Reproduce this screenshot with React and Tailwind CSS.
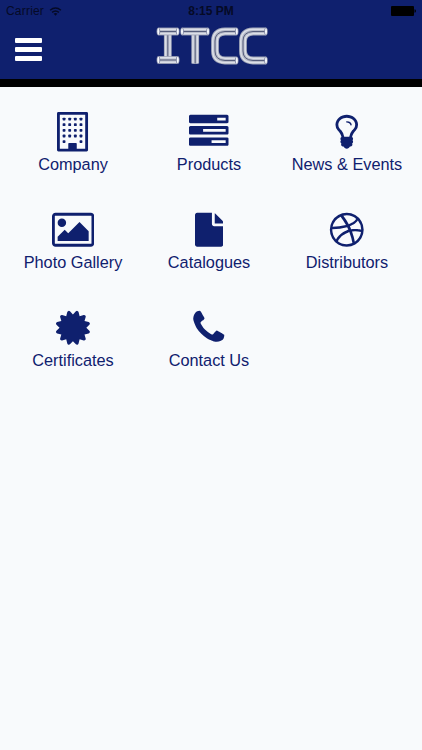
import React from "react";

const paths = {
  tasks:
    "M1024 1408h640v-128h-640v128zm-384-512h1024v-128h-1024v128zm640-512h384v-128h-384v128zm512 832v256q0 26-19 45t-45 19h-1664q-26 0-45-19t-19-45v-256q0-26 19-45t45-19h1664q26 0 45 19t19 45zm0-512v256q0 26-19 45t-45 19h-1664q-26 0-45-19t-19-45v-256q0-26 19-45t45-19h1664q26 0 45 19t19 45zm0-512v256q0 26-19 45t-45 19h-1664q-26 0-45-19t-19-45v-256q0-26 19-45t45-19h1664q26 0 45 19t19 45z",
  bulb:
    "M1120 576q0 13-9.5 22.5t-22.5 9.5-22.5-9.5-9.5-22.5q0-46-54-71t-106-25q-13 0-22.5-9.5t-9.5-22.5 9.5-22.5 22.5-9.5q50 0 99.5 16t87 54 37.5 90zm160 0q0-72-34.5-134t-90-101.5-123-62-136.5-22.5-136.5 22.5-123 62-90 101.5-34.5 134q0 101 68 180 10 11 30.5 33t30.5 33q128 153 141 298h228q13-145 141-298 10-11 30.5-33t30.5-33q68-79 68-180zm128 0q0 155-103 268-45 49-74.5 87t-59.5 95.5-34 107.5q47 28 47 82 0 37-25 64 25 27 25 64 0 52-45 81 13 23 13 47 0 46-31.5 71t-77.5 25q-20 44-60 70t-87 26-87-26-60-70q-46 0-77.5-25t-31.5-71q0-24 13-47-45-29-45-81 0-37 25-64-25-27-25-64 0-54 47-82-4-50-34-107.5t-59.5-95.5-74.5-87q-103-113-103-268 0-99 44.5-184.5t117-142 164-89 186.5-32.5 186.5 32.5 164 89 117 142 44.5 184.5z",
  picture:
    "M640 576q0 80-56 136t-136 56-136-56-56-136 56-136 136-56 136 56 56 136zm1024 384v448h-1408v-192l320-320 160 160 512-512zm96-704h-1600q-13 0-22.5 9.5t-9.5 22.5v1216q0 13 9.5 22.5t22.5 9.5h1600q13 0 22.5-9.5t9.5-22.5v-1216q0-13-9.5-22.5t-22.5-9.5zm160 32v1216q0 66-47 113t-113 47h-1600q-66 0-113-47t-47-113v-1216q0-66 47-113t113-47h1600q66 0 113 47t47 113z",
  file:
    "M768 128v512q0 40 28 68t68 28h416v832q0 40-28 68t-68 28h-1088q-40 0-68-28t-28-68v-1344q0-40 28-68t68-28zM896 608v-464q20 8 34 22l308 308q30 32 42 70v64z",
  dribbble:
    "M1152 1500q-42-241-140-498h-2l-2 1q-16 6-43 16.5t-101 49-137 82-131 114.5-103 148l-15-11q184 150 418 150 132 0 256-52zm-185-607q-21-49-53-111-311 93-673 93-1 7-1 21 0 124 44 236.5t124 201.5q50-89 123.5-166.5t142.5-124.5 130.5-81 99.5-48l37-13q4-1 13-3.5t13-4.5zm-107-212q-120-213-244-378-138 65-234 186t-128 272q302 0 606-80zm684 319q-210-60-409-29 87 239 128 469 111-75 185-189.5t96-250.5zm-805-741q-1 0-2 1 1-1 2-1zm590 145q-185-164-433-164-76 0-155 19 131 170 246 382 69-26 130-60.5t96.5-61.5 65.5-57 37.5-40.5zm223 485q-3-232-149-410l-1 1q-9 12-19 24.5t-43.5 44.5-71 60.5-100 65-131.5 64.5q25 53 44 95 2 5 6.5 17t7.5 17q36-5 74.5-7t73.5-2 69 1.5 64 4 56.5 5.5 48 6.5 36.5 6 25 4.5zm112 7q0 209-103 385.5t-279.5 279.5-385.5 103-385.5-103-279.5-279.5-103-385.5 103-385.5 279.5-279.5 385.5-103 385.5 103 279.5 279.5 103 385.5z",
  certificate:
    "M1376 896l138 135q30 28 20 70-12 41-52 51l-188 48 53 186q12 41-19 70-29 31-70 19l-186-53-48 188q-10 40-51 52-12 2-19 2-31 0-51-22l-135-138-135 138q-28 30-70 20-41-11-51-52l-48-188-186 53q-41 12-70-19-31-29-19-70l53-186-188-48q-40-10-52-51-10-42 20-70l138-135-138-135q-30-28-20-70 12-41 52-51l188-48-53-186q-12-41 19-70 29-31 70-19l186 53 48-188q10-41 51-51 41-12 70 19l135 139 135-139q29-30 70-19 41 10 51 51l48 188 186-53q41-12 70 19 31 29 19 70l-53 186 188 48q40 10 52 51 10 42-20 70z",
  phone:
    "M1600 1240q0 27-10 70.5t-21 68.5q-21 50-122 106-94 51-186 51-27 0-53-3.5t-57.5-12.5-47-14.5-55.5-20.5-49-18q-98-35-175-83-127-79-264-216t-216-264q-48-77-83-175-3-9-18-49t-20.5-55.5-14.5-47-12.5-57.5-3.5-53q0-92 51-186 56-101 106-122 25-11 68.5-21t70.5-10q14 0 21 3 18 6 53 76 11 19 30 54t35 63.5 31 53.5q3 4 17.5 25t21.5 35.5 7 28.5q0 20-28.5 50t-62 55-62 53-28.5 46q0 9 5 22.5t8.5 20.5 14 24 11.5 19q76 137 174 235t235 174q2 1 19 11.5t24 14 20.5 8.5 22.5 5q18 0 46-28.5t53-62 55-62 50-28.5q14 0 28.5 7t35.5 21.5 25 17.5q25 15 53.5 31t63.5 35 54 30q70 35 76 53 3 7 3 21z",
};

function Glyph({ name, viewBox }) {
  return (
    <svg viewBox={viewBox} className="h-[39.5px] w-auto" fill="currentColor">
      <path d={paths[name]} />
    </svg>
  );
}

function BuildingIcon() {
  const windows = [];
  for (let row = 0; row < 5; row++) {
    for (let col = 0; col < 4; col++) {
      if (row === 4 && (col === 1 || col === 2)) continue;
      windows.push([256 + col * 256, 256 + row * 256]);
    }
  }
  return (
    <svg viewBox="0 0 1408 1792" className="h-[39.5px] w-auto" fill="currentColor">
      <path
        fillRule="evenodd"
        d="M64 0h1280q64 0 64 64v1664q0 64-64 64h-1280q-64 0-64-64v-1664q0-64 64-64zM1280 1664v-1536h-1152v1536h384v-224q0-32 32-32h320q32 0 32 32v224z"
      />
      {windows.map(([x, y]) => (
        <rect key={`${x}-${y}`} x={x} y={y} width="128" height="128" rx="32" />
      ))}
    </svg>
  );
}

const items = [
  { label: "Company", icon: <BuildingIcon /> },
  { label: "Products", icon: <Glyph name="tasks" viewBox="0 0 1792 1792" /> },
  { label: "News & Events", icon: <Glyph name="bulb" viewBox="0 0 1792 1792" /> },
  { label: "Photo Gallery", icon: <Glyph name="picture" viewBox="0 0 1920 1792" /> },
  { label: "Catalogues", icon: <Glyph name="file" viewBox="0 0 1280 1792" /> },
  { label: "Distributors", icon: <Glyph name="dribbble" viewBox="0 0 1792 1792" /> },
  { label: "Certificates", icon: <Glyph name="certificate" viewBox="0 0 1536 1792" /> },
  { label: "Contact Us", icon: <Glyph name="phone" viewBox="0 0 1792 1792" /> },
];

// pipe segments of the logo, stems first so that the bars lie over them
const pipes = [
  "M13.8 8V36",
  "M4.5 7.5H23.5",
  "M4.5 36H23.5",
  "M41.2 8V39.5",
  "M28 7.5H54",
  "M82.5 7.5H71Q61 8 61 17V27Q61 36 71 36.5H82.5",
  "M112 7.5H99Q89 8 89 17V27Q89 36 99 36.5H112",
];
const caps = [[4.3, 7.5], [23.8, 7.5], [4.3, 36], [23.8, 36], [28, 7.5], [54, 7.5], [82.8, 7.5], [82.8, 36.5], [112, 7.5], [112, 36.5]];

function Logo() {
  return (
    <svg viewBox="0 0 116 44" className="h-11 w-[116px]" fill="none">
      {pipes.map(d => (
        <g key={d}>
          <path d={d} stroke="#a3a8ba" strokeWidth="7.8" />
          <path d={d} stroke="#dcdfe8" strokeWidth="6" />
          <path d={d} stroke="#b9bdca" strokeWidth="3" />
          <path d={d} stroke="#565d7c" strokeWidth="1" />
        </g>
      ))}
      {caps.map(([x, y]) => (
        <ellipse key={`${x}-${y}`} cx={x} cy={y} rx="1.5" ry="3.7" fill="#f6f8fd" stroke="#535b82" strokeWidth="0.6" />
      ))}
    </svg>
  );
}

function StatusBar() {
  return (
    <div className="grid h-[22px] grid-cols-3 items-center px-[6px] text-[12px] leading-[22px] text-[#050a26]">
      <div className="flex items-center gap-[5px]">
        <span className="tracking-[0.2px]">Carrier</span>
        <svg viewBox="0 0 14 10" className="h-[9px] w-[13px]" fill="none" stroke="currentColor" strokeWidth="1.7">
          <path d="M1 3.6Q7-1.4 13 3.6" />
          <path d="M3.2 6Q7 2.8 10.8 6" />
          <path d="M7 9.6L4.9 7.4Q7 5.9 9.1 7.4Z" fill="currentColor" stroke="none" />
        </svg>
      </div>
      <span className="text-center font-bold">8:15 PM</span>
      <svg viewBox="0 0 25 10" className="h-[10px] w-[25px] justify-self-end" fill="#000">
        <rect width="23" height="10" rx="1" />
        <path d="M23.5 3.2q1.5 0 1.5 1.8t-1.5 1.8z" />
      </svg>
    </div>
  );
}

export default function App() {
  return (
    <div className="flex h-[750px] w-[422px] flex-col overflow-hidden bg-[#f8fafc] font-['Liberation_Sans',Arial,sans-serif]">
      <header className="h-[87px] shrink-0 border-b-8 border-black bg-[#0f206e]">
        <StatusBar />
        <div className="grid grid-cols-[154px_1fr] pt-[2px]">
          <button aria-label="Menu" className="ml-[15px] mt-[14px] flex w-[27px] flex-col gap-[4px]">
            <span className="h-[5px] rounded-[1px] bg-white" />
            <span className="h-[5px] rounded-[1px] bg-white" />
            <span className="h-[5px] rounded-[1px] bg-white" />
          </button>
          <Logo />
        </div>
      </header>
      <main className="grid grid-cols-[136px_136px_140px] pl-[5px] pt-[25px] text-[#0f206e]">
        {items.map(item => (
          <a key={item.label} className="flex h-[98px] flex-col items-center">
            {item.icon}
            <span className="mt-[1px] whitespace-nowrap text-[16.3px] leading-[22px]">{item.label}</span>
          </a>
        ))}
      </main>
    </div>
  );
}
